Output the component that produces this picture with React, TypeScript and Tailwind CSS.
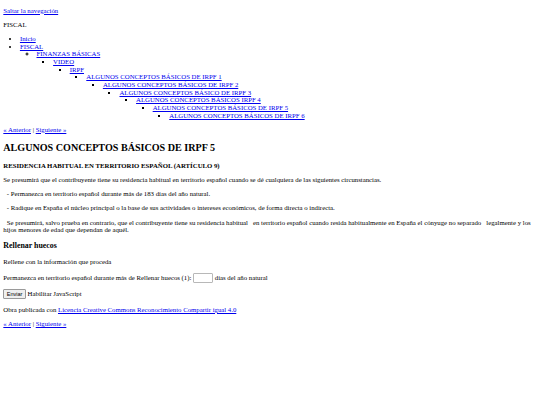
const linkCls = "text-[#0000ee] underline";

const chain = [
  "ALGUNOS CONCEPTOS BÁSICOS DE IRPF 1",
  "ALGUNOS CONCEPTOS BÁSICOS DE IRPF 2",
  "ALGUNOS CONCEPTOS BÁSICO DE IRPF 3",
  "ALGUNOS CONCEPTOS BÁSICOS IRPF 4",
  "ALGUNOS CONCEPTOS BÁSICOS DE IRPF 5",
  "ALGUNOS CONCEPTOS BÁSICOS DE IRPF 6",
];

function Nested({ level }: { level: number }) {
  if (level >= chain.length) return null;
  return (
    <ul className="list-[square] pl-[16.6px]">
      <li>
        <a className={linkCls} href="#">
          {chain[level]}
        </a>
        <Nested level={level + 1} />
      </li>
    </ul>
  );
}

function PrevNext() {
  return (
    <p className="my-[6.65px]">
      <a className={linkCls} href="#">
        « Anterior
      </a>{" "}
      |{" "}
      <a className={linkCls} href="#">
        Siguiente »
      </a>
    </p>
  );
}

export default function App() {
  return (
    <div className="bg-white px-[3.32px] font-['Liberation_Serif',serif] text-[6.77px] leading-[7.64px] text-black">
      <p className="my-[6.65px]">
        <a className={linkCls} href="#">
          Saltar la navegación
        </a>
      </p>
      <p className="my-[6.65px]">FISCAL</p>
      <ul className="my-[6.65px] list-disc pl-[16.6px]">
        <li>
          <a className={linkCls} href="#">
            Inicio
          </a>
        </li>
        <li>
          <a className={linkCls} href="#">
            FISCAL
          </a>
          <ul className="list-[circle] pl-[16.6px]">
            <li>
              <a className={linkCls} href="#">
                FINANZAS BÁSICAS
              </a>
              <ul className="list-[square] pl-[16.6px]">
                <li>
                  <a className={linkCls} href="#">
                    VIDEO
                  </a>
                  <ul className="list-[square] pl-[16.6px]">
                    <li>
                      <a className={linkCls} href="#">
                        IRPF
                      </a>
                      <Nested level={0} />
                    </li>
                  </ul>
                </li>
              </ul>
            </li>
          </ul>
        </li>
      </ul>
      <PrevNext />
      <h1 className="my-[8.27px] text-[10.1px] leading-[11.46px] font-bold">ALGUNOS CONCEPTOS BÁSICOS DE IRPF 5</h1>
      <p className="my-[6.65px]">
        <strong className="font-bold">RESIDENCIA HABITUAL EN TERRITORIO ESPAÑOL (ARTÍCULO 9)</strong>
      </p>
      <p className="my-[6.65px]">
        Se presumirá que el contribuyente tiene su residencia habitual en territorio español cuando se dé
        cualquiera de las siguientes circunstancias.
      </p>
      <p className="my-[6.65px]">{"\u00a0 - Permanezca en territorio español durante más de 183 días del año natural."}</p>
      <p className="my-[6.65px]">
        {"\u00a0 - Radique en España el núcleo principal o la base de sus actividades o intereses económicos, de forma directa o indirecta."}
      </p>
      <p className="my-[6.65px]">
        {"\u00a0 Se presumirá, salvo prueba en contrario, que el contribuyente tiene su residencia habitual \u00a0\u00a0en territorio español cuando resida habitualmente en España el cónyuge no separado \u00a0\u00a0legalmente y los hijos menores de edad que dependan de aquél."}
      </p>
      <h3 className="my-[7.78px] text-[7.9px] leading-[8.94px] font-bold">Rellenar huecos</h3>
      <p className="my-[6.65px]">Rellene con la información que proceda</p>
      <p className="my-[6.65px]">
        Permanezca en territorio español durante más de <label>Rellenar huecos (1):</label>{" "}
        <input
          type="text"
          className="inline-block h-[10px] w-[20px] rounded-[1px] border border-[#b8b8b8] bg-white align-middle"
        />{" "}
        días del año natural
      </p>
      <p className="my-[6.65px]">
        <button
          type="button"
          className="rounded-[1px] border border-[#9a9a9a] bg-[#efefef] px-[2.5px] py-[1px] align-middle font-['Liberation_Sans',sans-serif] text-[5.5px] leading-[normal]"
        >
          Enviar
        </button>{" "}
        Habilitar JavaScript
      </p>
      <p className="my-[6.65px]">
        Obra publicada con{" "}
        <a className={linkCls} href="#">
          Licencia Creative Commons Reconocimiento Compartir igual 4.0
        </a>
      </p>
      <PrevNext />
    </div>
  );
}
